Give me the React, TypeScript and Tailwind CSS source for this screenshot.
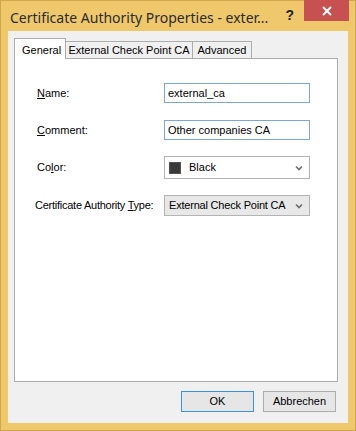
import React from 'react';

const ui = { fontFamily: '"Liberation Sans", Arial, sans-serif' };

function Chevron() {
    return (
        <svg width="8" height="6" viewBox="0 0 8 6" className="shrink-0">
            <path d="M1 1.5 L4 4.5 L7 1.5" fill="none" stroke="#6d6d6d" strokeWidth="1.6" />
        </svg>
    );
}

function Field({ label, top, children }: { label: React.ReactNode; top: number; children: React.ReactNode }) {
    return (
        <div className="flex items-center" style={{ marginTop: top }}>
            <div className="w-[149px] shrink-0 pl-[22px] text-[11px] text-black whitespace-nowrap">{label}</div>
            {children}
        </div>
    );
}

export default function App() {
    return (
        <div className="w-[356px] h-[431px] bg-[#f0c86c] border border-[#d2a64d] flex flex-col" style={ui}>
            {/* Title bar */}
            <div className="h-[30px] flex items-start shrink-0">
                <div
                    className="pl-[9px] pt-[6px] text-[14px] text-[#2b2b2b] whitespace-nowrap"
                    style={{ fontFamily: '"Noto Sans", "Open Sans", sans-serif' }}
                >
                    Certificate Authority Properties - exter...
                </div>
                <div className="flex-1" />
                <div className="pt-[4px] mr-[10px] text-[14px] font-bold text-[#222]">?</div>
                <div className="w-[45px] h-[21px] bg-[#c75050] flex items-center justify-center -mt-px mr-[6px]">
                    <svg width="10" height="10" viewBox="0 0 10 10">
                        <path d="M1 1 L9 9 M9 1 L1 9" stroke="#fff" strokeWidth="2" />
                    </svg>
                </div>
            </div>

            {/* Client area */}
            <div className="flex-1 mx-[7px] mb-[7px] bg-[#f0f0f0] flex flex-col pt-[7px] pl-[6px] pr-[10px]">
                {/* Tabs */}
                <div className="flex items-end h-[20px] relative z-10">
                    <div className="h-[21px] w-[52px] bg-white border border-b-0 border-[#adadad] text-[11px] text-black pl-[7px] pt-[3px] -mb-px">
                        General
                    </div>
                    <div className="h-[17px] w-[127px] bg-[#f0f0f0] border border-l-0 border-b-0 border-[#adadad] text-[11px] text-black flex items-center justify-center">
                        External Check Point CA
                    </div>
                    <div className="h-[17px] w-[59px] bg-[#f0f0f0] border border-l-0 border-b-0 border-[#adadad] text-[11px] text-black flex items-center justify-center">
                        Advanced
                    </div>
                </div>

                {/* Panel */}
                <div className="h-[324px] bg-white border border-[#adadad] flex flex-col">
                    <Field label={<><span className="underline">N</span>ame:</>} top={24}>
                        <div className="w-[146px] h-[20px] border border-[#7ea6db] text-[11px] text-black pl-[3px] flex items-center">
                            external_ca
                        </div>
                    </Field>
                    <Field label={<><span className="underline">C</span>omment:</>} top={17}>
                        <div className="w-[146px] h-[20px] border border-[#7ea6db] text-[11px] text-black pl-[3px] flex items-center">
                            Other companies CA
                        </div>
                    </Field>
                    <Field label={<>Co<span className="underline">l</span>or:</>} top={16}>
                        <div className="w-[146px] h-[23px] border border-[#b4b4b4] bg-white flex items-center pl-[4px] pr-[6px]">
                            <div className="w-[12px] h-[12px] bg-[#3a3a3a] border border-[#555]" />
                            <div className="ml-[8px] text-[11px] text-black flex-1">Black</div>
                            <Chevron />
                        </div>
                    </Field>
                    <Field
                        label={<span className="-ml-[2px] tracking-[-0.25px]">Certificate Authority <span className="underline">T</span>ype:</span>}
                        top={16}
                    >
                        <div className="w-[146px] h-[21px] border border-[#b4b4b4] bg-[#e8e8e8] flex items-center pl-[4px] pr-[6px]">
                            <div className="text-[11px] text-black flex-1 whitespace-nowrap tracking-[-0.2px]">External Check Point CA</div>
                            <Chevron />
                        </div>
                    </Field>
                </div>

                {/* Buttons */}
                <div className="flex justify-end gap-[9px] mt-[9px] pr-[2px]">
                    <button className="w-[73px] h-[21px] border border-[#3c90e6] bg-[#e6e6e6] text-[11px] text-black">
                        OK
                    </button>
                    <button className="w-[73px] h-[21px] border border-[#adadad] bg-[#e6e6e6] text-[11px] text-black">
                        Abbrechen
                    </button>
                </div>
            </div>
        </div>
    );
}
